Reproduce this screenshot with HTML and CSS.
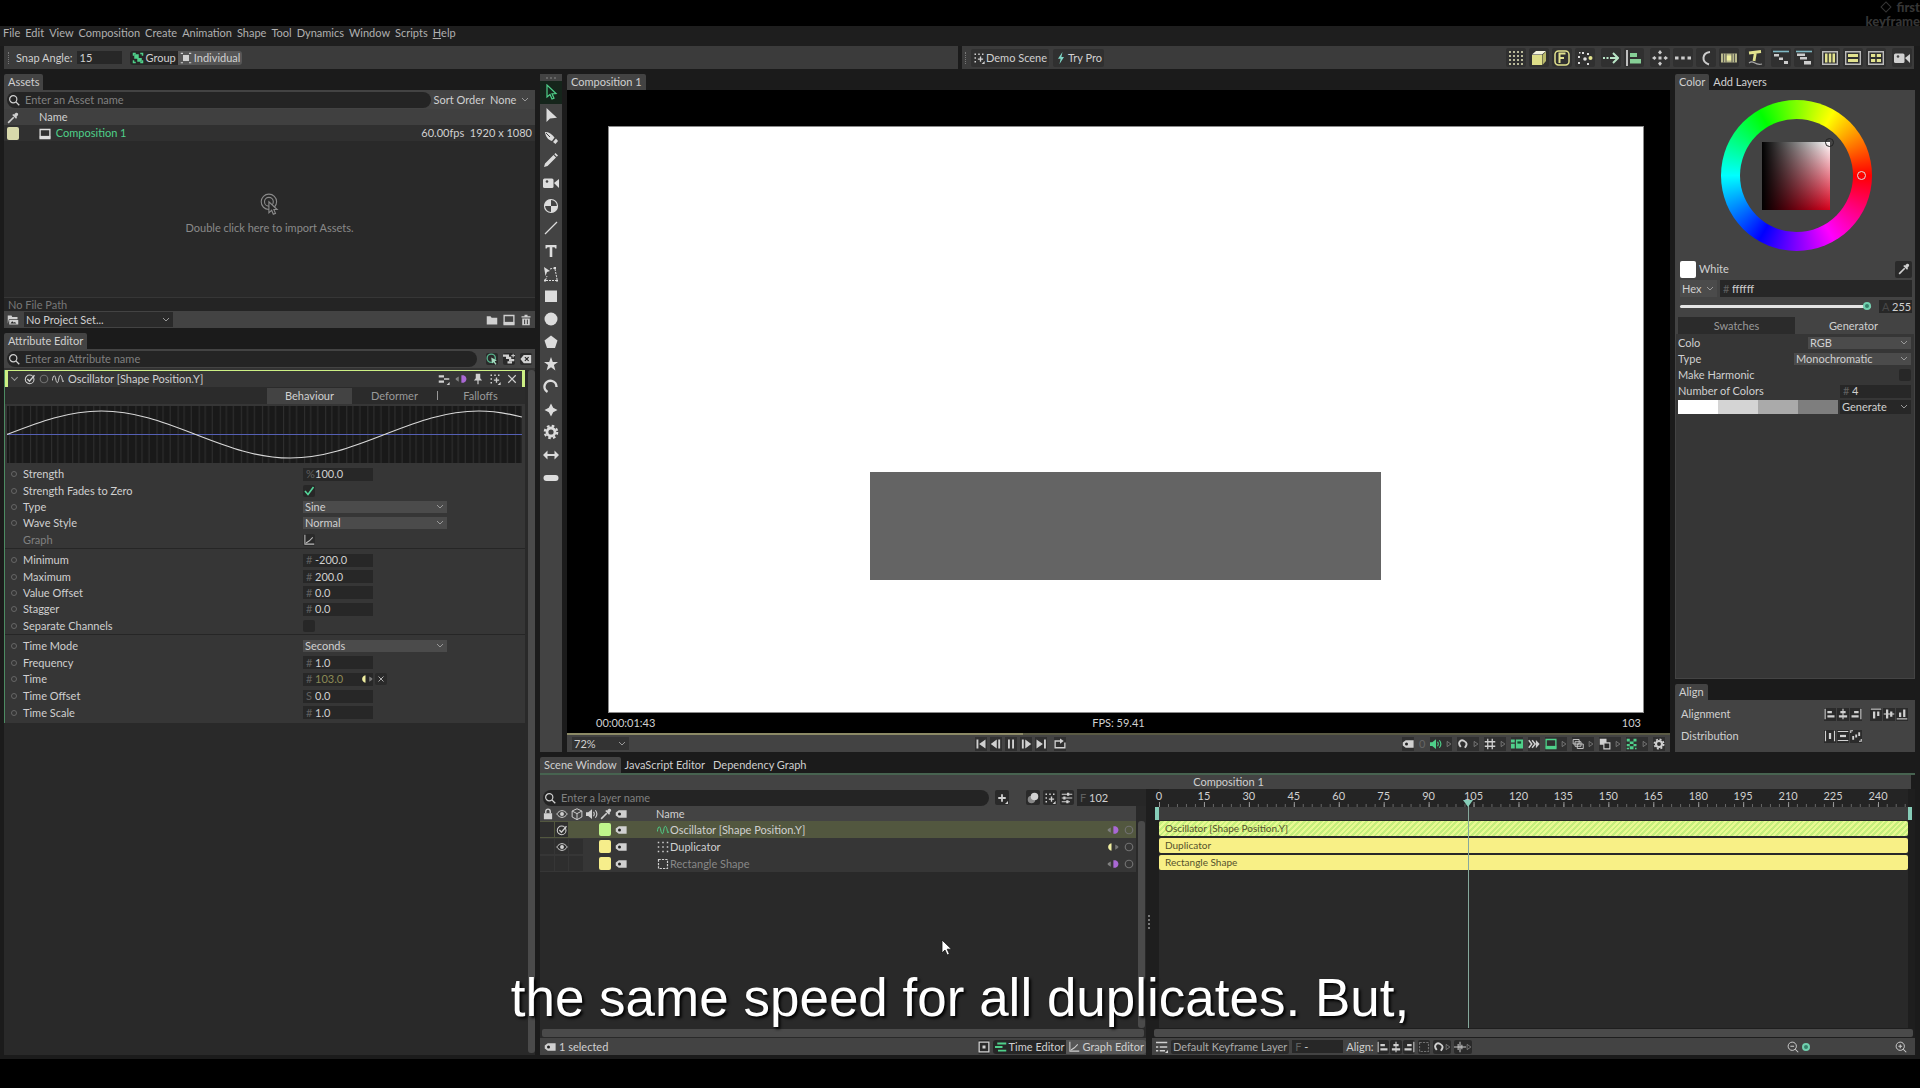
FILE: index.html
```html
<!DOCTYPE html>
<html lang="en">
<head>
<meta charset="utf-8">
<title>Composition 1</title>
<link rel="stylesheet" href="styles.css">
</head>
<body>
<svg class="sprite" aria-hidden="true">
  <symbol id="search" viewBox="0 0 16 16"><circle cx="7" cy="7" r="4.8" fill="none" stroke="currentColor" stroke-width="1.6"/><path d="M10.5 10.5 15 15" stroke="currentColor" stroke-width="1.8"/></symbol>
  <symbol id="picker" viewBox="0 0 16 16"><path d="M1.500 14.500 9 7" stroke="currentColor" stroke-width="2.200"/><path d="M7 4 12 9 13.500 7.500 12.500 6.500C15 4.500 15.500 3 14.300 1.700S11 1 9.500 3.500L8.500 2.500Z" fill="currentColor"/></symbol>
  <symbol id="comp" viewBox="0 0 16 16"><path d="M1.500 2h13v12h-13z" fill="none" stroke="currentColor" stroke-width="1.800"/><path d="M1 10.500h14V14H1z" fill="currentColor"/></symbol>
  <symbol id="folder" viewBox="0 0 16 16"><path d="M1 3h5l1.500 2H15v9H1z" fill="currentColor"/></symbol>
  <symbol id="project" viewBox="0 0 16 16"><path d="M1 2h5l1 2h7v3H2.500L1 13z" fill="currentColor"/><path d="M3 8h12v6H3z" fill="currentColor"/><path d="M4.500 12.500 7 9.500l2 2 1.500-1 2 2z" fill="#222"/></symbol>
  <symbol id="trash" viewBox="0 0 16 16"><path d="M2 3h4V1h4v2h4v1.800H2z" fill="currentColor"/><path d="M3 6h10v9H3z" fill="currentColor"/><path d="M6.200 7.500v6M9.800 7.500v6" stroke="#333" stroke-width="1.300"/></symbol>
  <symbol id="click" viewBox="0 0 20 20"><circle cx="9" cy="8" r="7" fill="none" stroke="currentColor"/><circle cx="9" cy="8" r="4" fill="none" stroke="currentColor"/><path d="M9 8v10l2.500-2.300 1.500 3.600 2-.8-1.500-3.500h3z" fill="#292929" stroke="currentColor"/></symbol>
  <symbol id="wave" viewBox="0 0 16 16"><path d="M.5 10C1.500 2 4 2 5 8s3 7 4 0 3.500-6 4.500 0 1.500 4 2 2" fill="none" stroke="currentColor" stroke-width="1.300"/></symbol>
  <symbol id="ckcircle" viewBox="0 0 16 16"><circle cx="7.500" cy="8.500" r="5.800" fill="none" stroke="currentColor" stroke-width="1.400"/><path d="M4.500 8 7.300 11 14 3" fill="none" stroke="currentColor" stroke-width="1.800"/></symbol>
  <symbol id="ring" viewBox="0 0 16 16"><circle cx="8" cy="8" r="5" fill="none" stroke="currentColor" stroke-width="1.600"/></symbol>
  <symbol id="x" viewBox="0 0 16 16"><path d="M3 3l10 10M13 3 3 13" stroke="currentColor" stroke-width="1.600"/></symbol>
  <symbol id="pin" viewBox="0 0 16 16"><path d="M5 1h6v6l2.500 3h-11L5 7z" fill="currentColor"/><path d="M8 9v6" stroke="currentColor" stroke-width="1.600"/></symbol>
  <symbol id="links" viewBox="0 0 16 16"><path d="M1 3h7v3H1zM1 10h7v3H1z" fill="currentColor"/><path d="M8 8h7" stroke="currentColor" stroke-width="2"/><path d="M15.500 12v4h-4z" fill="currentColor"/></symbol>
  <symbol id="keys" viewBox="0 0 16 16"><path d="M5 4.500v7L1 9V7z" fill="#808080"/><path d="M8.500 3h3c5 2 5 8 0 10h-3z" fill="#a968d4"/></symbol>
  <symbol id="keysy" viewBox="0 0 16 16"><path d="M6 3v10C0 12 0 4 6 3z" fill="#f0eea0"/><path d="M11 4.500v7l4-2.500V7z" fill="#777"/></symbol>
  <symbol id="sparkle" viewBox="0 0 16 16"><path d="M2 2h2v2H2zM7 2h2v2H7zM12 2h2v2h-2zM2 7h2v2H2zM2 12h2v2H2z" fill="currentColor"/><path d="M10 6v7M6.500 9.500h7" stroke="currentColor" stroke-width="1.800"/><path d="M15.500 12v4h-4z" fill="currentColor"/></symbol>
  <symbol id="target" viewBox="0 0 16 16"><circle cx="7" cy="7" r="5.500" fill="none" stroke="#57b08a" stroke-width="1.800"/><path d="M7 6l7.500 4-3 1 2.500 3.500-1.500 1-2.500-3.500L8 14z" fill="#a5dcc0"/></symbol>
  <symbol id="filter" viewBox="0 0 16 16"><path d="M0 2h8v3h3v3h4v3H8V8H4V5H0z" fill="currentColor"/><path d="M6 11h6v3H6z" fill="currentColor"/><path d="M13.500 1v5M11 3.500h5" stroke="currentColor" stroke-width="1.300"/></symbol>
  <symbol id="clear" viewBox="0 0 16 16"><path d="M5 2.500h10v11H5L.5 8z" fill="currentColor"/><path d="M6.500 5.500l5 5M11.500 5.500l-5 5" stroke="#222" stroke-width="1.500"/></symbol>
  <symbol id="graph" viewBox="0 0 16 16"><path d="M2.500 1v12.500H15" fill="none" stroke="currentColor" stroke-width="1.400"/><path d="M4 12 8.500 9 13 4.500" fill="none" stroke="currentColor" stroke-width="1.400"/></symbol>
  <symbol id="arrowo" viewBox="0 0 16 16"><path d="M4 1v12l3-2.500 2 4.500 2-.8-2-4.400 4-.3z" fill="none" stroke="currentColor" stroke-width="1.200"/></symbol>
  <symbol id="arrowf" viewBox="0 0 16 16"><path d="M3.500 1v14l3.500-3.500 7-.8z" fill="currentColor"/></symbol>
  <symbol id="pen" viewBox="0 0 16 16"><path d="M2 2c4 0 7 2 9.500 5.500L9 11C5 10 2.500 6.500 2 2z" fill="currentColor"/><path d="M10 12l3-3.500L15 11l-2.500 3z" fill="currentColor"/><path d="M3 3l4 4" stroke="#444" stroke-width="1"/></symbol>
  <symbol id="pencil" viewBox="0 0 16 16"><path d="M1 15l1-3.500L10.500 3 13 5.500 4.500 14zM11.300 2.200 12.500 1 15 3.500 13.800 4.700z" fill="currentColor"/></symbol>
  <symbol id="camera" viewBox="0 0 16 16"><rect x="0" y="3.500" width="10.500" height="9.500" rx="1.500" fill="currentColor"/><path d="M11 8l5-4v9z" fill="currentColor"/><circle cx="4" cy="6.500" r="1.300" fill="#444"/></symbol>
  <symbol id="ball" viewBox="0 0 16 16"><circle cx="8" cy="8" r="6.500" fill="none" stroke="currentColor" stroke-width="1.200"/><path d="M8 8V1.500A6.500 6.500 0 0 0 1.500 8zM8 8v6.500A6.500 6.500 0 0 0 14.500 8z" fill="currentColor"/></symbol>
  <symbol id="line" viewBox="0 0 16 16"><path d="M2 14 14 2" stroke="currentColor" stroke-width="1.300"/></symbol>
  <symbol id="ttool" viewBox="0 0 16 16"><path d="M2.500 2h11v3.500h-1.200L11.500 4.300H9.300V14H6.700V4.300H4.500L3.700 5.500H2.500z" fill="currentColor"/></symbol>
  <symbol id="edit" viewBox="0 0 16 16"><path d="M1 1l6 4-3 1-1.500 4z" fill="currentColor"/><path d="M2.500 14 4 10M12 3l2 10M3 14.500h10M7 3l4-1" stroke="currentColor" stroke-dasharray="2 1"/><path d="M1 13.500h2v2H1zM13 13.500h2v2h-2zM11 1h2v2h-2z" fill="currentColor"/></symbol>
  <symbol id="sq" viewBox="0 0 16 16"><path d="M2 2.500h12v11.500H2z" fill="currentColor"/></symbol>
  <symbol id="circ" viewBox="0 0 16 16"><circle cx="8" cy="8" r="6.500" fill="currentColor"/></symbol>
  <symbol id="pent" viewBox="0 0 16 16"><path d="M8 1.500 14.500 6.500 12 14H4L1.500 6.500z" fill="currentColor"/></symbol>
  <symbol id="star" viewBox="0 0 16 16"><path d="M8 1l1.800 4.900H15l-4.100 3.200L12.400 14.500 8 11.300 3.600 14.500 5.100 9.100 1 5.900h5.200z" fill="currentColor"/></symbol>
  <symbol id="arc" viewBox="0 0 16 16"><path d="M4.500 13A6 6 0 1 1 13.500 8" fill="none" stroke="currentColor" stroke-width="2.400"/></symbol>
  <symbol id="spark" viewBox="0 0 16 16"><path d="M8 1.500l2.200 4.300L14.500 8l-4.300 2.200L8 14.500l-2.200-4.300L1.500 8l4.300-2.200z" fill="currentColor"/></symbol>
  <symbol id="gear" viewBox="0 0 16 16"><circle cx="8" cy="8" r="4" fill="none" stroke="currentColor" stroke-width="2.800"/><circle cx="8" cy="8" r="6.200" fill="none" stroke="currentColor" stroke-width="2.200" stroke-dasharray="2.600 2.270"/></symbol>
  <symbol id="harrow" viewBox="0 0 16 16"><path d="M0 8l4.500-4.500V7h7V3.500L16 8l-4.500 4.500V9h-7v3.500z" fill="currentColor"/></symbol>
  <symbol id="pill" viewBox="0 0 16 16"><rect x=".5" y="5" width="15" height="6" rx="3" fill="currentColor"/></symbol>
  <symbol id="group" viewBox="0 0 16 16"><path d="M1 1h4v2H3v2H1zM11 1h4v4h-2V3h-2zM1 11h2v2h2v2H1zM13 11h2v4h-4v-2h2z" fill="currentColor"/><path d="M3 3h6v5h4v5H7V9H3z" fill="currentColor"/></symbol>
  <symbol id="indiv" viewBox="0 0 16 16"><path d="M1 1h3v1.500H1zM12 1h3v1.500h-3zM1 13.500h3V15H1zM12 13.500h3V15h-3zM4 4h8v8H4z" fill="currentColor"/></symbol>
  <symbol id="bolt" viewBox="0 0 16 16"><path d="M10 0 4 9h3.500L6 16l6-9.500H8.500z" fill="#7fd6c6"/></symbol>
  <symbol id="dots9" viewBox="0 0 16 16"><path d="M1 1h2v2H1zM5 1h2v2H5zM9 1h2v2H9zM13 1h2v2h-2zM1 5h2v2H1zM5 5h2v2H5zM9 5h2v2H9zM13 5h2v2h-2zM1 9h2v2H1zM5 9h2v2H5zM9 9h2v2H9zM13 9h2v2h-2zM1 13h2v2H1zM5 13h2v2H5zM9 13h2v2H9zM13 13h2v2h-2z" fill="#b9b99a"/></symbol>
  <symbol id="cubey" viewBox="0 0 16 16"><path d="M1 5h10v10H1z" fill="#dede88"/><path d="M1 4.500 5 1h10l-4 3.500z" fill="#f4f4e0"/><path d="M11.500 5 15 1.500V11l-3.500 4z" fill="#b8b86a"/></symbol>
  <symbol id="fbox" viewBox="0 0 16 16"><rect x="1" y="1" width="14" height="14" rx="3.500" fill="none" stroke="#e2e28e" stroke-width="1.500"/><path d="M5.500 13V3.500h6M5.500 8h4.500" stroke="#e2e28e" stroke-width="2" fill="none"/></symbol>
  <symbol id="scatter" viewBox="0 0 16 16"><path d="M1 6h2v2H1zM5 2h2v2H5zM10 3h2v2h-2zM1 12h2v2H1zM10 13h2v2h-2zM2 2h1.500v1.500H2z" fill="#ddd"/><circle cx="8" cy="9" r="1.800" fill="#ddd"/><circle cx="13.500" cy="8" r="2" fill="#e2e28e"/></symbol>
  <symbol id="goto" viewBox="0 0 16 16"><path d="M0 7h2v2H0zM3.500 7h2v2h-2zM7 7h7v2H7z" fill="#b9e5c6"/><path d="M10 3l5 5-5 5" fill="none" stroke="#b9e5c6" stroke-width="2"/></symbol>
  <symbol id="alignl" viewBox="0 0 16 16"><path d="M1 0v16" stroke="#eee" stroke-width="1.500"/><path d="M4 3h7v4H4zM4 9h11v4.500H4z" fill="#86cf96"/></symbol>
  <symbol id="cross5" viewBox="0 0 16 16"><path d="M8 0l2 2.500-2 2-2-2zM8 16l2-2.500-2-2-2 2zM0 8l2.500-2 2 2-2 2zM16 8l-2.500-2-2 2 2 2zM6.500 6.500h3v3h-3z" fill="#ccc"/></symbol>
  <symbol id="dots3" viewBox="0 0 16 16"><path d="M0 6.500h3.500v3H0zM6.200 6.500h3.500v3H6.200zM12.500 6.500H16v3h-3.500z" fill="#ccc"/></symbol>
  <symbol id="curve" viewBox="0 0 16 16"><path d="M12 2C4 3 3 12 11 14.500" fill="none" stroke="#ccc" stroke-width="2"/></symbol>
  <symbol id="strip" viewBox="0 0 16 16"><path d="M0 3.500h16v9H0z" fill="#b9b98c"/><path d="M5.500 5.500h5v5h-5z" fill="#f0f0a0"/><path d="M2.500 3.500v9M5 3.500v9M11 3.500v9M13.500 3.500v9" stroke="#444" stroke-width=".8"/></symbol>
  <symbol id="tpath" viewBox="0 0 16 16"><path d="M2 3l12-1.500M8.500 2 7 11" stroke="#e2e28e" stroke-width="2.800"/><path d="M2 13c5-4 5 3 13 1" fill="none" stroke="#aaa" stroke-width="1.200"/></symbol>
  <symbol id="stag1" viewBox="0 0 16 16"><path d="M0 1.500h16" stroke="#7fb8c4" stroke-width="1.600"/><path d="M1 4h5v2.500H1zM6 7.500h4V10H6zM11 11h4v3h-4z" fill="#ccc"/></symbol>
  <symbol id="stag2" viewBox="0 0 16 16"><path d="M0 1.500h16" stroke="#7fb8c4" stroke-width="1.600"/><path d="M1 3.500h8V6H1zM4 7h7v2.500H4zM8 11h7v3.500H8z" fill="#ccc"/></symbol>
  <symbol id="cols" viewBox="0 0 16 16"><path d="M.7 1.700h14.600v12.600H.7z" fill="none" stroke="#bbb" stroke-width="1.400"/><path d="M3 3.500h2.500v9H3zM6.800 3.500h2.500v9H6.800zM10.500 3.500H13v9h-2.500z" fill="#e2e28e"/></symbol>
  <symbol id="rows" viewBox="0 0 16 16"><path d="M.7 1.700h14.600v12.600H.7z" fill="none" stroke="#bbb" stroke-width="1.400"/><path d="M3 4h10v3H3zM3 9h10v3H3z" fill="#e2e28e"/></symbol>
  <symbol id="cells" viewBox="0 0 16 16"><path d="M.7 1.700h14.600v12.600H.7z" fill="none" stroke="#bbb" stroke-width="1.400"/><path d="M3 4h4.200v3H3zM8.800 4H13v3H8.800zM3 9h4.200v3H3zM8.800 9H13v3H8.800z" fill="#e2e28e"/></symbol>
  <symbol id="lock" viewBox="0 0 16 16"><path d="M2.500 7h11v8h-11z" fill="currentColor"/><path d="M5 7V4.500a3 3 0 0 1 6 0V7" fill="none" stroke="currentColor" stroke-width="1.800"/></symbol>
  <symbol id="eye" viewBox="0 0 16 16"><path d="M1 8c4-6 10-6 14 0-4 6-10 6-14 0z" fill="none" stroke="currentColor" stroke-width="1.300"/><circle cx="8" cy="8" r="2.600" fill="currentColor"/></symbol>
  <symbol id="cube" viewBox="0 0 16 16"><path d="M8 1l6.500 3v8L8 15.500 1.500 12V4zM1.500 4 8 7.500 14.500 4M8 7.500v8" fill="none" stroke="currentColor" stroke-width="1.300"/></symbol>
  <symbol id="sound" viewBox="0 0 16 16"><path d="M0 5.500h3L8 1.500v13L3 10.500H0z" fill="currentColor"/><path d="M10 5q2 3 0 6M12.500 3q4 5 0 10" fill="none" stroke="currentColor" stroke-width="1.500"/></symbol>
  <symbol id="tag" viewBox="0 0 16 16"><path d="M5 3h10.500v10H5L1 10V6z" fill="currentColor"/><circle cx="6" cy="8" r="2" fill="#222"/></symbol>
  <symbol id="dup" viewBox="0 0 16 16"><path d="M1 1h2v2H1zM7 1h2v2H7zM13 1h2v2h-2zM1 7h2v2H1zM7 7h2v2H7zM13 7h2v2h-2zM1 13h2v2H1zM7 13h2v2H7zM13 13h2v2h-2z" fill="currentColor"/></symbol>
  <symbol id="rect" viewBox="0 0 16 16"><path d="M2 2h12v12H2z" fill="none" stroke="currentColor" stroke-width="1.600" stroke-dasharray="3 1.500"/></symbol>
  <symbol id="plus" viewBox="0 0 16 16"><path d="M8 3v10M3 8h10" stroke="currentColor" stroke-width="2.400"/><path d="M16 12v4h-4z" fill="currentColor"/></symbol>
  <symbol id="blur" viewBox="0 0 16 16"><circle cx="6" cy="10" r="5" fill="#888"/><circle cx="10" cy="6" r="5" fill="currentColor"/></symbol>
  <symbol id="sliders" viewBox="0 0 16 16"><path d="M1 3h14M1 8h14M1 13h11" stroke="currentColor" stroke-width="1.400"/><path d="M8 1h3v4H8zM3 6h3v4H3zM7 11h3v4H7z" fill="currentColor"/></symbol>
  <symbol id="first" viewBox="0 0 16 16"><path d="M2 2h2.500v12H2zM14 2v12L5.500 8z" fill="currentColor"/></symbol>
  <symbol id="prev" viewBox="0 0 16 16"><path d="M9 2v12L1 8zM11 2h2.500v12H11z" fill="currentColor"/></symbol>
  <symbol id="pause" viewBox="0 0 16 16"><path d="M4 2h2.500v12H4zM9.500 2H12v12H9.500z" fill="currentColor"/></symbol>
  <symbol id="next" viewBox="0 0 16 16"><path d="M7 2v12l8-6zM2.500 2H5v12H2.500z" fill="currentColor"/></symbol>
  <symbol id="last" viewBox="0 0 16 16"><path d="M12 2h2.500v12H12zM2 2v12l8.500-6z" fill="currentColor"/></symbol>
  <symbol id="loop" viewBox="0 0 16 16"><path d="M9 4H1.500v9h13V6" fill="none" stroke="currentColor" stroke-width="1.800"/><path d="M8 .5 13 4 8 7.500z" fill="currentColor"/></symbol>
  <symbol id="tri" viewBox="0 0 8 16"><path d="M1.500 4.500v7l5-3.500z" fill="none" stroke="currentColor"/></symbol>
  <symbol id="magnet" viewBox="0 0 16 16"><path d="M5 12C0 6 5 1.500 9.500 4s4 5 1 9" fill="none" stroke="currentColor" stroke-width="2.600"/></symbol>
  <symbol id="hash" viewBox="0 0 16 16"><path d="M5 1v14M11 1v14M1 5h14M1 11h14" stroke="currentColor" stroke-width="1.700"/></symbol>
  <symbol id="guides" viewBox="0 0 16 16"><path d="M0 2h5v4H0zM0 7.500h5V14H0z" fill="currentColor"/><path d="M6.500 2H16v12H6.500z" fill="currentColor"/><path d="M8.500 4.500h5v3h-5z" fill="#154a2b"/></symbol>
  <symbol id="onion" viewBox="0 0 16 16"><path d="M1 3l4 5-4 5M5.500 3l4 5-4 5" fill="none" stroke="currentColor" stroke-width="2"/><path d="M10.500 2.500 15.500 8l-5 5.500z" fill="currentColor"/></symbol>
  <symbol id="layers" viewBox="0 0 16 16"><path d="M1.500 2h8v6h-8zM4 5h8v6H4zM7 8h8v6H7z" fill="#333" stroke="currentColor" stroke-width="1.200"/></symbol>
  <symbol id="squares" viewBox="0 0 16 16"><path d="M1 1h9v8H1z" fill="currentColor"/><path d="M6.500 6.500h8v8h-8z" fill="#2a2a2a" stroke="currentColor" stroke-width="1.500"/></symbol>
  <symbol id="checker" viewBox="0 0 16 16"><path d="M1 1h4v3.500H1zM10 1h4v3.500h-4zM5 4.500h5V8H5zM1 8h4v3H1zM10 8h4v3h-4zM5 11h5v4H5zM1 13h3v2H1zM12 13h2v2h-2z" fill="currentColor"/></symbol>
  <symbol id="al" viewBox="0 0 16 16"><path d="M1.500 1v14" stroke="currentColor" stroke-width="1.500"/><path d="M4.500 4h6v3h-6zM4.500 9.500H14v3H4.500z" fill="currentColor"/></symbol>
  <symbol id="ac" viewBox="0 0 16 16"><path d="M8 1v14" stroke="currentColor" stroke-width="1.500"/><path d="M4.500 4h7v3h-7zM2.500 9.500h11v3h-11z" fill="currentColor"/></symbol>
  <symbol id="ar" viewBox="0 0 16 16"><path d="M14.500 1v14" stroke="currentColor" stroke-width="1.500"/><path d="M5.500 4h6v3h-6zM2 9.500h9.500v3H2z" fill="currentColor"/></symbol>
  <symbol id="at" viewBox="0 0 16 16"><path d="M1 1.500h14" stroke="currentColor" stroke-width="1.500"/><path d="M4 4.500h3V14H4zM9.500 4.500h3v6h-3z" fill="currentColor"/></symbol>
  <symbol id="am" viewBox="0 0 16 16"><path d="M1 8h14" stroke="currentColor" stroke-width="1.500"/><path d="M4 2h3v12H4zM9.500 4.500h3v7h-3z" fill="currentColor"/></symbol>
  <symbol id="ab" viewBox="0 0 16 16"><path d="M1 14.500h14" stroke="currentColor" stroke-width="1.500"/><path d="M4 6h3v6H4zM9.500 2h3v10h-3z" fill="currentColor"/></symbol>
  <symbol id="dh" viewBox="0 0 16 16"><path d="M2 1v14M14 1v14" stroke="currentColor" stroke-width="1.500"/><path d="M6.500 4h3v8h-3z" fill="currentColor"/></symbol>
  <symbol id="dv" viewBox="0 0 16 16"><path d="M1 2h14M1 14h14" stroke="currentColor" stroke-width="1.500"/><path d="M4 6.500h8v3H4z" fill="currentColor"/></symbol>
  <symbol id="dg" viewBox="0 0 16 16"><path d="M1 4V1h3M15 12v3h-3" fill="none" stroke="currentColor" stroke-width="1.500"/><path d="M3 8h2.500v5H3zM7 6h2.500v4H7zM11 3h2.500v5H11z" fill="currentColor"/></symbol>
  <symbol id="frame" viewBox="0 0 16 16"><path d="M1.500 1.500h13v13h-13z" fill="none" stroke="currentColor" stroke-width="1.800"/><path d="M6 6h4v4H6z" fill="currentColor"/></symbol>
  <symbol id="bars" viewBox="0 0 16 16"><path d="M3 2h12v2.500H3zM0 6.800h10v2.500H0zM4 11.500h11V14H4z" fill="currentColor"/></symbol>
  <symbol id="klayer" viewBox="0 0 16 16"><path d="M0 2h15M0 8h3M5 8h10M0 13h3M5 13h7" stroke="currentColor" stroke-width="2"/><path d="M16 12v4h-4z" fill="currentColor"/></symbol>
  <symbol id="ripple" viewBox="0 0 16 16"><path d="M0 8h16M5.500 4v8M10.500 5v6M8 1v14" stroke="currentColor" stroke-width="1.300"/></symbol>
  <symbol id="zin" viewBox="0 0 16 16"><circle cx="7" cy="7" r="5.500" fill="none" stroke="currentColor" stroke-width="1.300"/><path d="M11 11l4 4M4.500 7h5M7 4.500v5" stroke="currentColor" stroke-width="1.400"/></symbol>
  <symbol id="zout" viewBox="0 0 16 16"><circle cx="7" cy="7" r="5.500" fill="none" stroke="currentColor" stroke-width="1.300"/><path d="M11 11l4 4M4.500 7h5" stroke="currentColor" stroke-width="1.400"/></symbol>
</svg>

<header class="letterbox">
  <p class="watermark"><span><i class="diamond"></i>first</span><span>keyframe</span></p>
</header>

<div class="app">
  <nav class="menu" aria-label="Main menu">
    <button>File</button><button>Edit</button><button>View</button><button>Composition</button><button>Create</button><button>Animation</button><button>Shape</button><button>Tool</button><button>Dynamics</button><button>Window</button><button>Scripts</button><button><u>H</u>elp</button>
  </nav>

  <div class="toolbars">
    <div class="toolbar toolbar-snap">
      <span class="grip"></span>
      <label for="snap">Snap Angle:</label>
      <span class="field snap-field"><input id="snap" value="15"></span>
      <div class="segment">
        <button class="seg-on"><svg class="ic green"><use href="#group"/></svg>Group</button><button class="seg-off"><svg class="ic"><use href="#indiv"/></svg>Individual</button>
      </div>
    </div>
    <div class="toolbar toolbar-main">
      <span class="grip"></span>
      <button class="promo"><svg class="ic"><use href="#sparkle"/></svg>Demo Scene</button>
      <button class="promo"><svg class="ic"><use href="#bolt"/></svg>Try Pro</button>
      <div class="quick">
        <button aria-label="Grid"><svg><use href="#dots9"/></svg></button>
        <button aria-label="Extrude"><svg><use href="#cubey"/></svg></button>
        <button aria-label="Forge"><svg><use href="#fbox"/></svg></button>
        <button aria-label="Particles"><svg><use href="#scatter"/></svg></button>
        <i class="quick-gap"></i>
        <button aria-label="Move"><svg><use href="#goto"/></svg></button>
        <button aria-label="Align left"><svg><use href="#alignl"/></svg></button>
        <i class="quick-gap"></i>
        <button aria-label="Null"><svg><use href="#cross5"/></svg></button>
        <button aria-label="Points"><svg><use href="#dots3"/></svg></button>
        <button aria-label="Bend"><svg><use href="#curve"/></svg></button>
        <button aria-label="Sequence"><svg><use href="#strip"/></svg></button>
        <i class="quick-gap"></i>
        <button aria-label="Text path"><svg><use href="#tpath"/></svg></button>
        <i class="quick-gap"></i>
        <button aria-label="Stagger"><svg><use href="#stag1"/></svg></button>
        <button aria-label="Overlap"><svg><use href="#stag2"/></svg></button>
        <i class="quick-gap"></i>
        <button aria-label="Columns"><svg><use href="#cols"/></svg></button>
        <button aria-label="Rows"><svg><use href="#rows"/></svg></button>
        <button aria-label="Cells"><svg><use href="#cells"/></svg></button>
        <i class="quick-gap"></i>
        <button aria-label="Camera"><svg><use href="#camera"/></svg></button>
      </div>
    </div>
  </div>

  <div class="workspace">
    <aside class="left">
      <section class="assets">
        <div class="tabs"><button class="tab tab-on">Assets</button></div>
        <div class="search-row">
          <label class="search"><svg class="ic"><use href="#search"/></svg><input aria-label="Asset name" placeholder="Enter an Asset name"></label>
          <label for="sort">Sort Order</label>
          <select id="sort" class="sel sort-sel"><option>None</option></select>
        </div>
        <table class="asset-table">
          <thead><tr><th class="a-color"><svg class="ic"><use href="#picker"/></svg></th><th class="a-name">Name</th><th class="a-fps"></th></tr></thead>
          <tbody><tr><td><i class="swatch cream"></i></td><td class="green"><svg class="ic white"><use href="#comp"/></svg> Composition 1</td><td class="a-fps">60.00fps&nbsp; 1920 x 1080</td></tr></tbody>
        </table>
        <button class="drop"><svg class="ic-click"><use href="#click"/></svg>Double click here to import Assets.</button>
        <p class="path">No File Path</p>
        <div class="project">
          <svg class="ic"><use href="#project"/></svg>
          <select class="sel project-sel" aria-label="Project"><option>No Project Set...</option></select>
          <span class="fill"></span>
          <button aria-label="New folder"><svg class="ic"><use href="#folder"/></svg></button>
          <button aria-label="New composition"><svg class="ic"><use href="#comp"/></svg></button>
          <button aria-label="Delete"><svg class="ic"><use href="#trash"/></svg></button>
        </div>
      </section>

      <section class="attrs">
        <div class="tabs"><button class="tab tab-on">Attribute Editor</button></div>
        <div class="search-row attr-search">
          <label class="search"><svg class="ic"><use href="#search"/></svg><input aria-label="Attribute name" placeholder="Enter an Attribute name"></label>
          <button class="dark" aria-label="Follow selection"><svg class="ic"><use href="#target"/></svg></button>
          <button class="dark" aria-label="Filter"><svg class="ic"><use href="#filter"/></svg></button>
          <button class="dark" aria-label="Clear"><svg class="ic"><use href="#clear"/></svg></button>
        </div>
        <div class="attr-body">
          <div class="inspector">
            <div class="insp-head">
              <i class="chev"></i><svg class="ic"><use href="#ckcircle"/></svg><svg class="ic dim"><use href="#ring"/></svg><svg class="ic"><use href="#wave"/></svg>
              <h2>Oscillator [Shape Position.Y]</h2>
              <svg class="ic"><use href="#links"/></svg><svg class="ic"><use href="#keys"/></svg><svg class="ic"><use href="#pin"/></svg><svg class="ic"><use href="#sparkle"/></svg><svg class="ic"><use href="#x"/></svg>
            </div>
            <div class="subtabs"><button class="sub-on">Behaviour</button><button>Deformer</button><i></i><button>Falloffs</button></div>
            <svg class="graph" viewBox="0 0 513 57" preserveAspectRatio="none">
              <defs><pattern id="stripes" width="21" height="57" patternUnits="userSpaceOnUse"><path d="M2.500 0v57M8.500 0v57M15.500 0v57" stroke="#303030"/></pattern></defs>
              <rect width="513" height="57" fill="#191919"/><rect width="513" height="57" fill="url(#stripes)"/>
              <path d="M0 28.500H513" stroke="#5560b4" stroke-width="1.200"/>
              <path d="M0 28.500C31 16.500 60 5 94 5S157 16.500 188 28.500S248 52 282 52S345 40.500 376 28.500S436 5 470 5C487 5 501 8 513 11" fill="none" stroke="#d8d8d8" stroke-width="1.200"/>
            </svg>
            <div class="props">
              <div class="prop"><i class="dot"></i><label for="p1">Strength</label><span class="field"><b>%</b><input id="p1" value="100.0"></span></div>
              <div class="prop"><i class="dot"></i><label for="p2">Strength Fades to Zero</label><input id="p2" type="checkbox" class="check" checked></div>
              <div class="prop"><i class="dot"></i><label for="p3">Type</label><select id="p3" class="sel"><option>Sine</option></select></div>
              <div class="prop"><i class="dot"></i><label for="p4">Wave Style</label><select id="p4" class="sel"><option>Normal</option></select></div>
              <div class="prop muted"><i></i><span>Graph</span><button class="dark" aria-label="Open graph"><svg class="ic"><use href="#graph"/></svg></button></div>
            </div>
            <div class="props">
              <div class="prop"><i class="dot"></i><label for="p5">Minimum</label><span class="field"><b>#</b><input id="p5" value="-200.0"></span></div>
              <div class="prop"><i class="dot"></i><label for="p6">Maximum</label><span class="field"><b>#</b><input id="p6" value="200.0"></span></div>
              <div class="prop"><i class="dot"></i><label for="p7">Value Offset</label><span class="field"><b>#</b><input id="p7" value="0.0"></span></div>
              <div class="prop"><i class="dot"></i><label for="p8">Stagger</label><span class="field"><b>#</b><input id="p8" value="0.0"></span></div>
              <div class="prop"><i class="dot"></i><label for="p9">Separate Channels</label><input id="p9" type="checkbox" class="check"></div>
            </div>
            <div class="props">
              <div class="prop"><i class="dot"></i><label for="p10">Time Mode</label><select id="p10" class="sel"><option>Seconds</option></select></div>
              <div class="prop"><i class="dot"></i><label for="p11">Frequency</label><span class="field"><b>#</b><input id="p11" value="1.0"></span></div>
              <div class="prop"><i class="dot"></i><label for="p12">Time</label><span class="with-key"><span class="field"><b>#</b><input id="p12" class="keyed" value="103.0"><svg class="ic"><use href="#keysy"/></svg></span><button class="dark" aria-label="Disconnect"><svg class="ic-s"><use href="#x"/></svg></button></span></div>
              <div class="prop"><i class="dot"></i><label for="p13">Time Offset</label><span class="field"><b>S</b><input id="p13" value="0.0"></span></div>
              <div class="prop"><i class="dot"></i><label for="p14">Time Scale</label><span class="field"><b>#</b><input id="p14" value="1.0"></span></div>
            </div>
          </div>
          <i class="vscroll"></i>
        </div>
      </section>
    </aside>

    <main class="main">
      <div class="upper">
        <div class="tools">
          <i class="tools-grip"></i>
          <div class="tool-list">
            <button class="tool-on" aria-label="Select"><svg><use href="#arrowo"/></svg></button>
            <button aria-label="Edit"><svg><use href="#arrowf"/></svg></button>
            <button aria-label="Pen"><svg><use href="#pen"/></svg></button>
            <button aria-label="Pencil"><svg><use href="#pencil"/></svg></button>
            <button aria-label="Camera"><svg><use href="#camera"/></svg></button>
            <button aria-label="Pivot"><svg><use href="#ball"/></svg></button>
            <button aria-label="Line"><svg><use href="#line"/></svg></button>
            <button aria-label="Text"><svg><use href="#ttool"/></svg></button>
            <button aria-label="Edit shape"><svg><use href="#edit"/></svg></button>
            <button aria-label="Rectangle"><svg><use href="#sq"/></svg></button>
            <button aria-label="Ellipse"><svg><use href="#circ"/></svg></button>
            <button aria-label="Polygon"><svg><use href="#pent"/></svg></button>
            <button aria-label="Star"><svg><use href="#star"/></svg></button>
            <button aria-label="Arc"><svg><use href="#arc"/></svg></button>
            <button aria-label="Super ellipse"><svg><use href="#spark"/></svg></button>
            <button aria-label="Cogwheel"><svg><use href="#gear"/></svg></button>
            <button aria-label="Arrow"><svg><use href="#harrow"/></svg></button>
            <button aria-label="Capsule"><svg><use href="#pill"/></svg></button>
          </div>
        </div>

        <section class="viewport">
          <div class="tabs"><button class="tab tab-on">Composition 1</button></div>
          <div class="stage">
            <div class="canvas"><div class="shape"></div></div>
            <div class="readout"><span>00:00:01:43</span><span>FPS: 59.41</span><span>103</span></div>
          </div>
          <div class="progress"><i></i></div>
          <div class="viewbar">
            <div class="vb-left"><select class="sel zoom-sel" aria-label="Zoom"><option>72%</option></select></div>
            <div class="transport">
              <button aria-label="First frame"><svg class="ic"><use href="#first"/></svg></button>
              <button aria-label="Previous frame"><svg class="ic"><use href="#prev"/></svg></button>
              <button aria-label="Pause"><svg class="ic"><use href="#pause"/></svg></button>
              <button aria-label="Next frame"><svg class="ic"><use href="#next"/></svg></button>
              <button aria-label="Last frame"><svg class="ic"><use href="#last"/></svg></button>
              <button aria-label="Loop"><svg class="ic"><use href="#loop"/></svg></button>
            </div>
            <div class="vb-right">
              <button aria-label="Tag"><svg class="ic"><use href="#tag"/></svg></button><span class="zero">0</span>
              <button class="pair" aria-label="Sound"><svg class="ic green"><use href="#sound"/></svg><svg class="ar"><use href="#tri"/></svg></button>
              <button class="pair" aria-label="Snapping"><svg class="ic"><use href="#magnet"/></svg><svg class="ar"><use href="#tri"/></svg></button>
              <button class="pair" aria-label="Grid"><svg class="ic"><use href="#hash"/></svg><svg class="ar"><use href="#tri"/></svg></button>
              <button aria-label="Guides"><svg class="ic green"><use href="#guides"/></svg></button>
              <button aria-label="Onion skin"><svg class="ic"><use href="#onion"/></svg></button>
              <button class="pair" aria-label="Display"><svg class="ic green"><use href="#comp"/></svg><svg class="ar"><use href="#tri"/></svg></button>
              <button class="pair" aria-label="Layers"><svg class="ic"><use href="#layers"/></svg><svg class="ar"><use href="#tri"/></svg></button>
              <button class="pair" aria-label="Overlay"><svg class="ic"><use href="#squares"/></svg><svg class="ar"><use href="#tri"/></svg></button>
              <button class="pair" aria-label="Transparency"><svg class="ic green"><use href="#checker"/></svg><svg class="ar"><use href="#tri"/></svg></button>
              <button aria-label="Settings"><svg class="ic"><use href="#gear"/></svg></button>
            </div>
          </div>
        </section>

        <aside class="right">
          <section class="color">
            <div class="tabs"><button class="tab tab-on">Color</button><button class="tab">Add Layers</button></div>
            <div class="color-top">
              <div class="wheel"><div class="wheel-hole"><div class="sv"><i class="sv-mark"></i></div></div><i class="hue-mark"></i></div>
              <div class="named"><i class="chip"></i><span>White</span><button class="dark" aria-label="Pick color"><svg class="ic"><use href="#picker"/></svg></button></div>
              <div class="hex"><select class="sel" aria-label="Format"><option>Hex</option></select><span class="field"><b>#</b><input aria-label="Hex value" value="ffffff"></span></div>
              <div class="alpha"><input type="range" aria-label="Alpha" min="0" max="255" value="255"><span class="field"><b>A</b><input aria-label="Alpha value" value="255"></span></div>
            </div>
            <div class="gen-tabs"><button>Swatches</button><button class="sub-on">Generator</button></div>
            <div class="gen">
              <div class="gen-row"><label for="g1">Colo</label><select id="g1" class="sel w-rgb"><option>RGB</option></select></div>
              <div class="gen-row"><label for="g2">Type</label><select id="g2" class="sel w-mono"><option>Monochromatic</option></select></div>
              <div class="gen-row"><label for="g3">Make Harmonic</label><input id="g3" type="checkbox" class="check"></div>
              <div class="gen-row"><label for="g4">Number of Colors</label><span class="field w-num"><b>#</b><input id="g4" value="4"></span></div>
              <div class="gen-out"><div class="ramp"><i class="r1"></i><i class="r2"></i><i class="r3"></i><i class="r4"></i></div><select class="sel w-num" aria-label="Generate"><option>Generate</option></select></div>
            </div>
          </section>
          <section class="align">
            <div class="tabs"><button class="tab tab-on">Align</button></div>
            <div class="align-body">
              <div class="align-row"><span>Alignment</span>
                <div><button aria-label="Left"><svg class="ic"><use href="#al"/></svg></button><button aria-label="Centre"><svg class="ic"><use href="#ac"/></svg></button><button aria-label="Right"><svg class="ic"><use href="#ar"/></svg></button></div>
                <div><button aria-label="Top"><svg class="ic"><use href="#at"/></svg></button><button aria-label="Middle"><svg class="ic"><use href="#am"/></svg></button><button aria-label="Bottom"><svg class="ic"><use href="#ab"/></svg></button></div>
              </div>
              <div class="align-row"><span>Distribution</span>
                <div><button aria-label="Horizontal"><svg class="ic"><use href="#dh"/></svg></button><button aria-label="Vertical"><svg class="ic"><use href="#dv"/></svg></button><button aria-label="Grid"><svg class="ic"><use href="#dg"/></svg></button></div>
                <div></div>
              </div>
            </div>
          </section>
        </aside>
      </div>

      <section class="scene">
        <div class="tabs scene-tabs"><button class="tab tab-on">Scene Window</button><button class="tab">JavaScript Editor</button><button class="tab">Dependency Graph</button></div>
        <h1 class="scene-title">Composition 1</h1>
        <div class="scene-body">
          <div class="layers">
            <div class="search-row layer-search">
              <label class="search"><svg class="ic"><use href="#search"/></svg><input aria-label="Layer name" placeholder="Enter a layer name"></label>
              <button class="dark add" aria-label="Add layer"><svg class="ic"><use href="#plus"/></svg></button>
              <button class="dark" aria-label="Motion blur"><svg class="ic"><use href="#blur"/></svg></button>
              <button class="dark" aria-label="Effects"><svg class="ic"><use href="#sparkle"/></svg></button>
              <button class="dark" aria-label="Options"><svg class="ic"><use href="#sliders"/></svg></button>
              <span class="field frame-field"><b>F</b><input aria-label="Frame" value="102"></span>
            </div>
            <div class="layer-area">
              <table class="layer-table">
                <colgroup><col class="c-wide"><col class="c-i"><col class="c-wide"><col class="c-wide"><col class="c-i"><col class="c-wide"><col class="c-icon"><col><col class="c-key"><col class="c-wide"></colgroup>
                <thead><tr>
                  <th><svg class="ic"><use href="#lock"/></svg></th><th><svg class="ic"><use href="#eye"/></svg></th><th><svg class="ic"><use href="#cube"/></svg></th><th><svg class="ic"><use href="#sound"/></svg></th><th><svg class="ic"><use href="#picker"/></svg></th><th><svg class="ic"><use href="#tag"/></svg></th><th class="type-cell" colspan="2">Name</th><th></th><th></th>
                </tr></thead>
                <tbody>
                  <tr class="picked"><td><i class="cell"></i></td><td><i class="cell"><svg class="ic"><use href="#ckcircle"/></svg></i></td><td></td><td></td><td><i class="swatch lime"></i></td><td><svg class="ic"><use href="#tag"/></svg></td><td class="type-cell green"><svg class="ic"><use href="#wave"/></svg></td><td>Oscillator [Shape Position.Y]</td><td><svg class="ic"><use href="#keys"/></svg></td><td><svg class="ic dim"><use href="#ring"/></svg></td></tr>
                  <tr><td><i class="cell"></i></td><td><i class="cell"><svg class="ic"><use href="#eye"/></svg></i></td><td><i class="cell"></i></td><td></td><td><i class="swatch yellow"></i></td><td><svg class="ic"><use href="#tag"/></svg></td><td class="type-cell"><svg class="ic"><use href="#dup"/></svg></td><td>Duplicator</td><td><svg class="ic"><use href="#keysy"/></svg></td><td><svg class="ic dim"><use href="#ring"/></svg></td></tr>
                  <tr class="hidden-layer"><td><i class="cell"></i></td><td><i class="cell"></i></td><td><i class="cell"></i></td><td></td><td><i class="swatch yellow"></i></td><td><svg class="ic"><use href="#tag"/></svg></td><td class="type-cell"><svg class="ic"><use href="#rect"/></svg></td><td class="faded">Rectangle Shape</td><td><svg class="ic"><use href="#keys"/></svg></td><td><svg class="ic dim"><use href="#ring"/></svg></td></tr>
                </tbody>
              </table>
              <i class="vscroll"></i>
            </div>
            <i class="hscroll"></i>
            <div class="status">
              <svg class="ic"><use href="#tag"/></svg><span>1 selected</span><span class="fill"></span>
              <button class="dark" aria-label="Frame all"><svg class="ic"><use href="#frame"/></svg></button>
              <div class="segment"><button class="seg-on"><svg class="ic green"><use href="#bars"/></svg>Time Editor</button><button class="seg-off"><svg class="ic"><use href="#graph"/></svg>Graph Editor</button></div>
            </div>
          </div>

          <div class="split"><i></i></div>

          <div class="timeline">
            <div class="scale">
              <ol class="ruler"><li>0</li><li>15</li><li>30</li><li>45</li><li>60</li><li>75</li><li>90</li><li>105</li><li>120</li><li>135</li><li>150</li><li>165</li><li>180</li><li>195</li><li>210</li><li>225</li><li>240</li></ol>
              <div class="range"><i></i><i></i></div>
              <div class="tracks">
                <div class="track hatch">Oscillator [Shape Position.Y]</div>
                <div class="track">Duplicator</div>
                <div class="track">Rectangle Shape</div>
              </div>
              <div class="playhead" style="left:41.2%"></div>
            </div>
            <i class="hscroll"></i>
            <div class="status timeline-status">
              <svg class="ic"><use href="#klayer"/></svg><button class="dark keylayer">Default Keyframe Layer</button>
              <span class="field key-field"><b>F</b><input aria-label="Key frame" value="-"></span>
              <span>Align:</span>
              <span class="key-align"><button class="dark" aria-label="Align start"><svg class="ic"><use href="#al"/></svg></button><button class="dark" aria-label="Align centre"><svg class="ic"><use href="#ac"/></svg></button><button class="dark" aria-label="Align end"><svg class="ic"><use href="#ar"/></svg></button></span>
              <button class="dark dim" aria-label="Box"><svg class="ic"><use href="#rect"/></svg></button>
              <button class="dark pair" aria-label="Snap"><svg class="ic"><use href="#magnet"/></svg><svg class="ar"><use href="#tri"/></svg></button>
              <button class="dark pair" aria-label="Ripple"><svg class="ic"><use href="#ripple"/></svg><svg class="ar"><use href="#tri"/></svg></button>
              <span class="fill"></span>
              <svg class="ic"><use href="#zout"/></svg><input class="zoomer" type="range" aria-label="Timeline zoom" value="0"><svg class="ic"><use href="#zin"/></svg>
            </div>
          </div>
        </div>
      </section>
    </main>
  </div>
</div>

<footer class="letterbox-end"></footer>
<svg class="cursor" viewBox="0 0 12 17"><path d="M1 1v13l3-3 2.200 5 2.200-1-2.200-4.800H10.500z" fill="#fff" stroke="#111" stroke-width=".8"/></svg>
<p class="caption">the same speed for all duplicates. But,</p>
</body>
</html>
```
FILE: styles.css
```css
* { box-sizing: border-box; margin: 0; padding: 0; }

body {
  display: flex;
  flex-direction: column;
  min-height: 100vh;
  position: relative;
  overflow-x: hidden;
  background: #000;
  color: #d0d0d0;
  font: 11px/14px Lato, "Noto Sans", sans-serif;
}

button, input, select { font: inherit; color: inherit; border: 0; background: none; min-width: 0; }
button { display: inline-flex; align-items: center; justify-content: center; white-space: nowrap; }
input { outline: 0; }
i { font-style: normal; }
svg { display: block; flex: none; width: 16px; height: 16px; }
.sprite { position: absolute; width: 0; height: 0; }
.ic { width: 12px; height: 12px; }
.ic-s { width: 8px; height: 8px; }
.ar { width: 6px; height: 12px; color: #888; }
.ic-click { width: 22px; height: 22px; }
.green { color: #4fd08a; }
.white { color: #ddd; }
.dim { color: #707070; }
.faded { color: #888; }
.fill { flex: 1; }
.dark { background: #2a2a2a; border-radius: 2px; }

/* letterbox */
.letterbox { height: 26px; display: flex; justify-content: flex-end; position: relative; z-index: 1; }
.letterbox-end { height: 29px; }
.watermark { display: flex; flex-direction: column; align-items: flex-end; color: #353535; font-size: 13px; line-height: 14px; font-weight: 900; }
.watermark span { display: flex; align-items: center; gap: 6px; }
.diamond { width: 8px; height: 8px; border: 1px solid #353535; transform: rotate(45deg); }

.app { flex: 1; display: flex; flex-direction: column; background: #1b1b1b; padding-bottom: 4px; }

.menu { display: flex; align-items: center; height: 20px; gap: 5px; padding: 0 3px 6px; color: #b0b0b0; background: #1e1e1e; }

.toolbars { display: flex; gap: 4px; padding: 0 6px 0 4px; }
.toolbar { display: flex; align-items: center; height: 23px; background: #3b3b3b; }
.toolbar-snap { flex: 0 1 954px; padding-left: 4px; }
.toolbar-snap label { margin-left: 6px; }
.snap-field { width: 45px; margin: 0 8px 0 4px; padding-left: 14px; }
.toolbar-main { flex: 1 1 0; gap: 4px; padding: 0 2px 0 3px; }
.grip { width: 2px; height: 12px; border-left: 1px dotted #777; }
.segment { display: flex; border-radius: 3px; overflow: hidden; }
.segment button { height: 14px; gap: 2px; padding: 0 2px; }
.seg-on { background: #262626; }
.seg-off { background: #565656; }
.promo { height: 18px; gap: 1px; padding: 0 2px; background: #303030; border-radius: 2px; }
.quick { margin-left: auto; display: flex; align-items: center; gap: 3px; }
.quick button { width: 20px; height: 19px; background: #303030; border-radius: 2px; }
.quick-gap { width: 0; }

.workspace { flex: 1; display: flex; gap: 5px; padding: 5px 5px 0 4px; }
.left { flex: 0 0 531px; display: flex; flex-direction: column; gap: 5px; }

/* tabs */
.tabs { display: flex; height: 16px; }
.tab { padding: 0 4px; color: #d0d0d0; }
.tab-on { background: #434343; border-radius: 2px 2px 0 0; }

/* fields */
.field { display: flex; align-items: center; height: 13px; background: #272727; padding-left: 3px; gap: 3px; overflow: hidden; }
.field b { font-weight: 400; color: #606060; width: 6px; }
.field input { flex: 1; width: 0; }
.sel {
  appearance: none;
  height: 12px;
  line-height: 12px;
  padding: 0 14px 0 2px;
  background: #4b4b4b url("data:image/svg+xml,%3Csvg xmlns='http://www.w3.org/2000/svg' width='8' height='6'%3E%3Cpath d='M1 1l3 3 3-3' fill='none' stroke='%23999'/%3E%3C/svg%3E") no-repeat right 3px center;
}
.check { appearance: none; width: 12px; height: 12px; background: #272727; border-radius: 2px; }
.check:checked { background: #272727 url("data:image/svg+xml,%3Csvg xmlns='http://www.w3.org/2000/svg' width='12' height='12'%3E%3Cpath d='M2 6l3 3.500L10.500 2' fill='none' stroke='%2355d69a' stroke-width='1.600'/%3E%3C/svg%3E"); }

.search-row { display: flex; align-items: center; height: 19px; background: #434343; padding: 0 3px; gap: 3px; }
.search { flex: 1; display: flex; align-items: center; gap: 5px; height: 16px; background: #242424; border-radius: 8px; padding-left: 1px; }
.search input { flex: 1; }
::placeholder { color: #808080; opacity: 1; }

/* assets */
.assets { display: flex; flex-direction: column; min-height: 254px; background: #292929; }
.assets .tabs, .attrs .tabs { background: #1b1b1b; }
.sort-sel { width: 44px; background-color: #434343; }
.asset-table { width: 100%; border-collapse: collapse; table-layout: fixed; }
.asset-table th { background: #404040; font-weight: 400; text-align: left; }
.asset-table tr { height: 16px; background: #303030; }
.asset-table td, .asset-table th { padding: 0 3px; height: 16px; white-space: nowrap; }
.asset-table svg { display: inline-block; vertical-align: middle; margin-right: 2px; }
.asset-table .a-color { width: 32px; }
.asset-table .a-fps { width: 160px; text-align: right; color: #d0d0d0; }
.swatch { display: block; width: 12px; height: 13px; border-radius: 2px; }
.cream { background: #d8d9ab; }
.lime { background: #bff58b; }
.yellow { background: #f6ee8b; }
.drop { flex: 1; flex-direction: column; gap: 6px; color: #8a8a8a; padding-bottom: 10px; }
.path { height: 14px; line-height: 14px; padding: 0 4px; color: #777; background: #242424; border-top: 1px solid #363636; }
.project { display: flex; align-items: center; gap: 5px; height: 17px; background: #434343; padding: 0 3px; }
.project-sel { width: 149px; background-color: #2a2a2a; height: 15px; }

/* attribute editor */
.attrs { flex: 1; display: flex; flex-direction: column; }
.attr-search { gap: 5px; }
.attr-search .search { margin-right: 4px; }
.attr-body { flex: 1; display: flex; background: #292929; gap: 3px; padding-bottom: 2px; border-top: 2px solid #333; }
.inspector { flex: 1; align-self: flex-start; background: #363636; border-left: 1px solid #4c8a62; padding-bottom: 2px; }
.vscroll { width: 7px; background: #4a4a4a; border-radius: 3px; }
.insp-head { display: flex; align-items: center; gap: 2px; height: 17px; border: solid #cdf084; border-width: 1px 3px 0; padding: 0 4px 0 2px; background: #363636; }
.insp-head h2 { flex: 1; font-size: 11px; font-weight: 400; padding-left: 2px; }
.insp-head h2 ~ svg { margin-left: 3px; }
.chev { width: 5px; height: 5px; margin: 0 5px 3px 2px; border: solid #999; border-width: 0 1px 1px 0; transform: rotate(45deg); }
.subtabs { display: grid; grid-template-columns: 85px 85px 1px 85px; justify-content: end; background: #2b2b2b; height: 17px; margin-bottom: 2px; align-items: center; padding-right: 2px; }
.subtabs button { height: 16px; color: #999; }
.subtabs i { height: 9px; background: #999; }
.subtabs .sub-on, .sub-on { background: #434343; color: #d0d0d0; }
.graph { display: block; width: calc(100% - 5px); height: 57px; margin: 0 2px 3px; }
.props { display: grid; grid-auto-rows: 1fr; min-height: 83px; padding: 0 4px; border-bottom: 1px solid #262626; margin-bottom: 3px; }
.props:last-child { border: 0; margin: 0; }
.prop { display: grid; grid-template-columns: 9px 275px 144px; column-gap: 5px; align-items: center; }
.dot { width: 6px; height: 6px; margin-left: 2px; border: 1px solid #666; border-radius: 50%; }
.prop .field { width: 70px; }
.muted { color: #808080; }
.muted button { width: 12px; color: #bbb; }
.with-key { display: flex; gap: 2px; align-items: center; }
.with-key button { width: 12px; height: 12px; }
.keyed { color: #8c8a55; }

/* main column */
.main { flex: 1; min-width: 0; display: flex; flex-direction: column; gap: 5px; }
.upper { flex: 1; display: flex; gap: 5px; }
.tools { flex: 0 0 22px; background: #434343; color: #dcdcdc; }
.tools-grip { display: block; width: 10px; height: 5px; margin: 0 auto 2px; border-bottom: 2px dotted #666; }
.tool-list { display: grid; grid-auto-rows: 1fr; min-height: 408px; }
.tool-on { background: #15251b; color: #4fd08a; }

.viewport { flex: 1; min-width: 0; display: flex; flex-direction: column; }
.stage { flex: 1; display: flex; flex-direction: column; background: #000; padding: 36px 26px 0 41px; }
.canvas { flex: 1; position: relative; background: #fff; border: 1px solid #8a8a8a; }
.shape { position: absolute; left: 25.200%; top: 58.900%; width: 49.500%; height: 18.500%; background: #646464; }
.readout { display: grid; grid-template-columns: 1fr 1fr 1fr; height: 20px; align-items: center; text-align: center; margin: 0 3px 0 -12px; }
.readout span:first-child { text-align: left; }
.readout span:last-child { text-align: right; }
.progress { height: 2px; background: #5a5a44; }
.progress i { display: block; width: 41.300%; height: 2px; background: #8c8a66; }
.viewbar { display: flex; align-items: center; height: 17px; background: #434343; padding: 0 5px; }
.vb-left, .vb-right { flex: 1; }
.zoom-sel { width: 57px; height: 13px; background-color: #333; }
.transport { display: flex; gap: 3px; margin-right: 196px; }
.transport button { width: 12px; height: 14px; background: #303030; }
.transport button:last-child { margin-left: 4px; }
.vb-right { display: flex; align-items: center; justify-content: flex-end; gap: 5px; }
.vb-right button { height: 14px; background: #303030; }
.vb-right .pair { gap: 4px; }
.zero { color: #666; width: 6px; }

/* right column */
.right { flex: 0 0 240px; display: flex; flex-direction: column; gap: 5px; }
.color { flex: 1; display: flex; flex-direction: column; }
.color-top { background: #434343; padding: 10px 3px 3px 5px; }
.wheel { position: relative; width: 151px; height: 151px; margin: 0 auto 9px; border-radius: 50%; background: conic-gradient(from 90deg, #f00, #f0f, #00f, #0ff, #0f0, #ff0, #f00); padding: 19px; }
.wheel-hole { height: 113px; border-radius: 50%; background: #434343; display: grid; place-content: center; }
.sv { position: relative; width: 68px; height: 68px; background: linear-gradient(to right, #000, transparent), linear-gradient(#fff, #d8001c); }
.sv-mark, .hue-mark { position: absolute; width: 9px; height: 9px; border: 1px solid #222; border-radius: 50%; right: -4px; top: -4px; }
.hue-mark { border-color: #ddd; top: 71px; right: 6px; }
.named { display: flex; align-items: center; gap: 3px; height: 18px; }
.named button { margin-left: auto; width: 17px; height: 17px; }
.chip { width: 16px; height: 17px; background: #fff; border-radius: 2px; }
.hex { display: grid; grid-template-columns: 37px 1fr; gap: 3px; padding: 2px 0; }
.hex .sel, .hex .field { height: 17px; }
.alpha { display: grid; grid-template-columns: 1fr 33px; gap: 8px; align-items: center; height: 15px; }
.alpha .field b { width: 7px; color: #484848; }
input[type=range] { appearance: none; height: 10px; }
.alpha input[type=range]::-webkit-slider-runnable-track { height: 3px; background: #e4e4e4; border-radius: 2px; }
input[type=range]::-webkit-slider-thumb { appearance: none; width: 8px; height: 8px; background: #35806a; border: 2px solid #70cfae; border-radius: 50%; }
.alpha input[type=range]::-webkit-slider-thumb { margin-top: -3px; }
.gen-tabs { display: grid; grid-template-columns: 1fr 1fr; height: 17px; background: #2b2b2b; border: solid #434343; border-width: 0 3px; color: #999; }
.gen { flex: 1; background: #363636; padding: 1px 3px 0 2px; border: 1px solid #444; border-top: 0; }
.gen-row { display: flex; align-items: center; justify-content: space-between; height: 16px; }
.w-rgb { width: 103px; }
.w-mono { width: 117px; }
.w-num { width: 71px; }
.gen-out { display: flex; justify-content: space-between; gap: 2px; padding-top: 1px; }
.gen-out .sel { height: 14px; background-color: #272727; }
.ramp { flex: 1; display: flex; height: 14px; }
.ramp i { flex: 1; }
.r1 { background: #fff; } .r2 { background: #d4d4d4; } .r3 { background: #aaa; } .r4 { background: #7e7e7e; }
.align-body { background: #434343; padding: 3px 5px 5px 6px; height: 52px; display: grid; }
.align-row { display: grid; grid-template-columns: 1fr 40px 40px; gap: 6px; align-items: center; }
.align-row div { display: flex; gap: 1px; }
.align-row button { background: #2b2b2b; width: 12px; height: 13px; }

/* scene */
.scene { display: flex; flex-direction: column; min-height: 298px; }
.scene-tabs { height: 18px; border-bottom: 2px solid #476350; }
.scene-title { height: 14px; background: #434343; font-size: 11px; line-height: 14px; font-weight: 400; text-align: center; margin-right: 4px; padding-left: 6px; }
.scene-body { flex: 1; display: flex; background: #1e1e1e; }
.layers { flex: 0 0 606px; display: flex; flex-direction: column; background: #292929; }
.layer-search { height: 17px; padding: 0 0 0 3px; }
.layer-search button { width: 14px; height: 15px; }
.layer-search .add { margin: 0 14px 0 3px; }
.frame-field { width: 69px; height: 17px; }
.layer-area { flex: 1; display: flex; gap: 2px; }
.layer-area .vscroll { margin-top: 15px; margin-right: 1px; }
.layer-table { flex: 1; align-self: flex-start; border-collapse: collapse; table-layout: fixed; width: 596px; }
.layer-table thead tr { height: 15px; background: #434343; }
.layer-table tbody tr { height: 17px; background: #363636; }
.layer-table tr.picked { background: #52573f; }
.layer-table th { height: 15px; font-weight: 400; text-align: left; }
.layer-table td { height: 17px; }
.layer-table svg { margin: 0 auto; }
.layer-table .type-cell { padding-left: 28px; }
.c-i { width: 14px; }
.c-wide { width: 15px; }
.c-icon { width: 42px; }
.c-key { width: 16px; }
.cell { display: grid; place-items: center; height: 15px; margin-right: 1px; background: #2e2e2e; }
.hscroll { height: 8px; background: #4a4a4a; border-radius: 2px; margin: 1px 2px; }
.status { display: flex; align-items: center; gap: 3px; height: 17px; background: #434343; padding: 0 4px; }
.status button { height: 14px; }
.layers .status { padding-right: 0; }
.timeline-status { padding-right: 8px; }
.split { flex: 0 0 6px; display: grid; place-items: center; background: #1e1e1e; }
.split i { width: 2px; height: 14px; border-left: 2px dotted #777; }

.timeline { flex: 1; min-width: 0; display: flex; flex-direction: column; }
.scale { flex: 1; position: relative; display: flex; flex-direction: column; margin: 0 7px; background: #292929; }
.ruler {
  display: flex; height: 18px; list-style: none;
  background:
    linear-gradient(90deg, #999 1px, transparent 1px) 0 100% / 6% 5px repeat-x,
    linear-gradient(90deg, #666 1px, transparent 1px) 0 100% / 1.200% 3px repeat-x,
    #242424;
}
.ruler li { flex: 0 0 6%; text-align: center; line-height: 14px; }
.ruler li:first-child { margin-left: -3%; }
.range { display: flex; justify-content: space-between; height: 13px; background: #3c3c3c; margin: 0 -4px 1px; }
.range i { width: 4px; background: #86cdb8; }
.tracks { display: grid; gap: 2px; }
.track { height: 15px; line-height: 14px; padding-left: 6px; border-radius: 2px; background: #f8f086; color: #55522c; font-size: 10px; }
.hatch { background: repeating-linear-gradient(135deg, #e9fa92 0 2px, #c4ee7c 2px 4px); }
.playhead { position: absolute; top: 16px; bottom: 0; width: 1px; background: #86a89c; }
.playhead::before { content: ""; position: absolute; left: -5px; top: -5px; border: solid transparent; border-width: 7px 5px 0; border-top-color: #86cdb8; }
.keylayer { color: #aaa; padding: 0 2px; }
.key-field { width: 51px; }
.key-align { display: flex; gap: 1px; }
.zoomer { width: 90px; }

/* overlays */
.cursor { position: absolute; left: 49%; top: 939px; width: 12px; height: 17px; }
.caption { position: absolute; left: 0; right: 0; bottom: 59px; text-align: center; font: 53px/62px "Liberation Sans", Arial, sans-serif; color: #fff; text-shadow: 2px 2px 3px #000; }
```
